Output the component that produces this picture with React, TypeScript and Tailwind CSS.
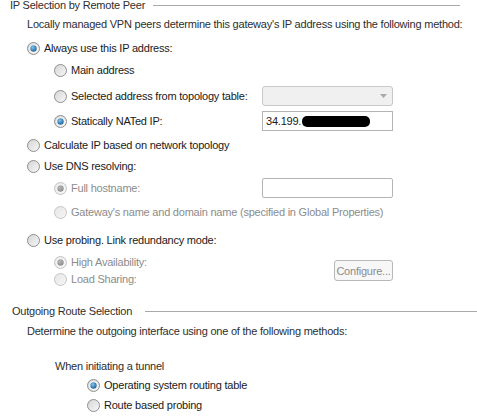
import React from "react";

type RadioProps = { checked?: boolean; disabled?: boolean };

function Radio({ checked, disabled }: RadioProps) {
  const id = React.useId().replace(/:/g, "");
  return (
    <svg width="13" height="13" viewBox="0 0 13 13" className="shrink-0">
      <defs>
        <linearGradient id={"g" + id} x1="0" y1="0" x2="1" y2="1">
          <stop offset="0" stopColor={disabled ? "#e6e6e6" : "#d4d4d4"} />
          <stop offset="1" stopColor={disabled ? "#f6f6f6" : "#f8f8f8"} />
        </linearGradient>
        <radialGradient id={"d" + id} cx="0.4" cy="0.35" r="0.7">
          <stop offset="0" stopColor={disabled ? "#b8b8b8" : "#7fc4f0"} />
          <stop offset="1" stopColor={disabled ? "#8a8a8a" : "#1b5c8e"} />
        </radialGradient>
      </defs>
      <circle cx="6.5" cy="6.5" r="6" fill={`url(#g${id})`} stroke={disabled ? "#c4c4c4" : "#8f8f8f"} strokeWidth="1" />
      {checked && (
        <>
          <circle cx="6.5" cy="6.5" r="4" fill="#ffffff" />
          <circle cx="6.5" cy="6.5" r="3.2" fill={`url(#d${id})`} />
        </>
      )}
    </svg>
  );
}

function RadioRow({
  checked,
  disabled,
  label,
  className = "",
}: RadioProps & { label: string; className?: string }) {
  return (
    <div className={"flex h-[16px] items-center " + className}>
      <Radio checked={checked} disabled={disabled} />
      <span className={"ml-[4px] whitespace-nowrap " + (disabled ? "text-[#8c8c8c]" : "text-[#1a1a1a]")}>{label}</span>
    </div>
  );
}

export default function App() {
  return (
    <div
      className="w-[477px] h-[420px] overflow-hidden bg-white text-[11px] leading-[16px] tracking-[-0.22px] text-[#1a1a1a]"
      style={{ fontFamily: '"Liberation Sans", Arial, sans-serif' }}
    >
      {/* Header 1 */}
      <div className="-mt-[3px] flex h-[16px] items-center pl-[10px] pr-[17px]">
        <span className="whitespace-nowrap text-[#2e2e2e]">IP Selection by Remote Peer</span>
        <div className="ml-[8px] h-px flex-1 bg-[#a9a9a9]" />
      </div>
      <div className="mt-[3px] h-[16px] pl-[27px] text-[#2e2e2e] whitespace-nowrap">
        Locally managed VPN peers determine this gateway's IP address using the following method:
      </div>

      <RadioRow className="mt-[8px] pl-[27px]" checked label="Always use this IP address:" />
      <RadioRow className="mt-[6px] pl-[54px]" label="Main address" />

      <div className="mt-[10px] flex h-[16px] items-center pl-[54px]">
        <div className="flex w-[208px] items-center">
          <Radio />
          <span className="ml-[4px] whitespace-nowrap">Selected address from topology table:</span>
        </div>
        <div className="flex h-[20px] w-[131px] shrink-0 items-center justify-end rounded-[3px] border border-[#c8c8c8] bg-[#f0f0f0] pr-[5px]">
          <svg width="7" height="4" viewBox="0 0 7 4">
            <path d="M0 0 L7 0 L3.5 4 Z" fill="#a8a8a8" />
          </svg>
        </div>
      </div>

      <div className="mt-[9px] flex h-[16px] items-center pl-[54px]">
        <div className="flex w-[208px] items-center">
          <Radio checked />
          <span className="ml-[4px] whitespace-nowrap">Statically NATed IP:</span>
        </div>
        <div className="flex h-[20px] w-[131px] shrink-0 items-center border border-[#b4b4b4] bg-white pl-[3px]">
          <span>34.199.</span>
          <span className="ml-[1px] h-[11px] w-[68px] rounded-[5px] bg-black" />
        </div>
      </div>

      <RadioRow className="mt-[8px] pl-[27px]" label="Calculate IP based on network topology" />
      <RadioRow className="mt-[5px] pl-[27px]" label="Use DNS resolving:" />

      <div className="mt-[6px] flex h-[16px] items-center pl-[54px]">
        <div className="flex w-[208px] items-center">
          <Radio checked disabled />
          <span className="ml-[4px] whitespace-nowrap text-[#8c8c8c]">Full hostname:</span>
        </div>
        <div className="h-[20px] w-[131px] shrink-0 rounded-[2px] border border-[#b4b4b4] bg-white" />
      </div>

      <RadioRow
        className="mt-[8px] pl-[54px]"
        disabled
        label="Gateway's name and domain name (specified in Global Properties)"
      />

      <RadioRow className="mt-[12px] pl-[27px]" label="Use probing. Link redundancy mode:" />

      <div className="mt-[6px] flex items-center pl-[54px]">
        <div className="flex w-[280px] flex-col">
          <RadioRow checked disabled label="High Availability:" />
          <RadioRow className="mt-[1px]" disabled label="Load Sharing:" />
        </div>
        <button className="flex h-[21px] w-[59px] items-center justify-center rounded-[3px] border border-[#b8b8b8] bg-[#f7f7f7] text-[#8c8c8c]">
          Configure...
        </button>
      </div>

      {/* Header 2 */}
      <div className="mt-[16px] flex h-[16px] items-center pl-[12px]">
        <span className="whitespace-nowrap text-[#2e2e2e]">Outgoing Route Selection</span>
        <div className="ml-[13px] h-px flex-1 bg-[#a9a9a9]" />
      </div>
      <div className="mt-[4px] h-[16px] pl-[27px] text-[#2e2e2e] whitespace-nowrap">
        Determine the outgoing interface using one of the following methods:
      </div>

      <div className="mt-[19px] h-[16px] pl-[55px] text-[#2e2e2e] whitespace-nowrap">When initiating a tunnel</div>
      <RadioRow className="mt-[3px] pl-[87px]" checked label="Operating system routing table" />
      <RadioRow className="mt-[4px] pl-[87px]" label="Route based probing" />
    </div>
  );
}
